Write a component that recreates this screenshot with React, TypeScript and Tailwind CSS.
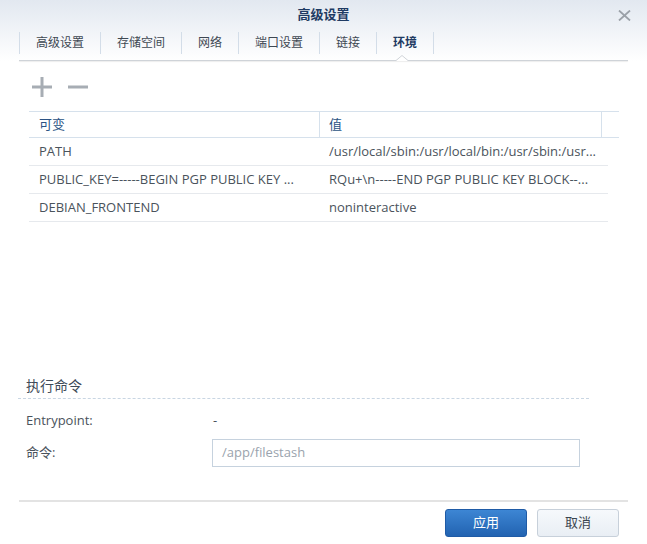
import React from "react";

const tabs = ["高级设置", "存储空间", "网络", "端口设置", "链接", "环境"];

const rows = [
  ["PATH", "/usr/local/sbin:/usr/local/bin:/usr/sbin:/usr..."],
  ["PUBLIC_KEY=-----BEGIN PGP PUBLIC KEY ...", "RQu+\\n-----END PGP PUBLIC KEY BLOCK--..."],
  ["DEBIAN_FRONTEND", "noninteractive"],
];

export default function App() {
  return (
    <div className="w-[647px] h-[544px] bg-white flex flex-col font-['Liberation_Sans','Noto_Sans_CJK_SC',sans-serif] text-[#4a535c] overflow-hidden">
      {/* header + tabs with gradient */}
      <div className="bg-gradient-to-b from-[#e2e8f0] to-white">
        <div className="h-[30px] grid grid-cols-[1fr_auto_1fr] items-center">
          <div />
          <div className="text-[13px] font-bold text-[#1f3b63]">高级设置</div>
          <div className="flex justify-end pr-[16px]">
            <svg width="13" height="11" viewBox="0 0 13 11">
              <path d="M1 0.5 L12 10.5 M12 0.5 L1 10.5" stroke="#9ba1a8" strokeWidth="1.8" fill="none" />
            </svg>
          </div>
        </div>
        <div className="mx-[19px] mt-[2px]">
          <div className="flex h-[22px]">
            {tabs.map((t, i) => (
              <div
                key={t}
                className={`flex items-center px-4 border-l border-[#d3dde8] text-[12px] ${
                  i === tabs.length - 1
                    ? "border-r font-bold text-[#1f3b63]"
                    : "text-[#3e4852]"
                }`}
              >
                {t}
              </div>
            ))}
          </div>
          <div className="h-[6px]" />
          <div className="relative h-[1px] bg-[#cfd3d8] shadow-[0_1px_1px_rgba(0,0,0,0.08)]">
            <svg
              className="absolute left-[377px] bottom-0"
              width="12"
              height="6"
              viewBox="0 0 12 6"
            >
              <path d="M0 6 L0 5.5 L6 0.5 L12 5.5 L12 6 Z" fill="white" />
              <path d="M0 5.5 L6 0.5 L12 5.5" stroke="#cfd3d8" strokeWidth="1" fill="none" />
            </svg>
          </div>
        </div>
      </div>

      {/* toolbar */}
      <div className="h-[50px] pl-[32px] flex items-center gap-[16px] pt-[2px]">
        <svg width="20" height="20" viewBox="0 0 20 20">
          <rect x="0" y="8.5" width="20" height="3" fill="#a7adb4" />
          <rect x="8.5" y="0" width="3" height="20" fill="#a7adb4" />
        </svg>
        <svg width="20" height="20" viewBox="0 0 20 20">
          <rect x="0" y="8.5" width="20" height="3" fill="#a7adb4" />
        </svg>
      </div>

      {/* table */}
      <div className="ml-[29px] w-[590px] text-[13px] font-['Open_Sans','Noto_Sans_CJK_SC',sans-serif]">
        <div className="flex h-[27px] border-y border-[#d6e1ec] text-[#2b5384]">
          <div className="w-[291px] pl-[10px] flex items-center border-r border-[#d6e1ec]">可变</div>
          <div className="w-[282px] pl-[9px] flex items-center border-r border-[#d6e1ec]">值</div>
          <div className="flex-1" />
        </div>
        {rows.map((r) => (
          <div key={r[0]} className="flex h-[28px] w-[579px] border-b border-[#e6e9ed]">
            <div className="w-[291px] pl-[10px] flex items-center whitespace-nowrap overflow-hidden">{r[0]}</div>
            <div className="flex-1 pl-[9px] flex items-center whitespace-nowrap overflow-hidden">{r[1]}</div>
          </div>
        ))}
      </div>

      <div className="flex-1" />

      {/* command section */}
      <div className="font-['Open_Sans','Noto_Sans_CJK_SC',sans-serif]">
        <div className="mx-[18px] w-[571px] border-b border-dashed border-[#c9d6e3] pb-[3px] pl-[8px] text-[14px] text-[#3e4a58] h-[24px] flex items-center">
          执行命令
        </div>
        <div className="pl-[26px] mt-[9px] flex items-center h-[26px] text-[13px]">
          <div className="w-[187px]">Entrypoint:</div>
          <div>-</div>
        </div>
        <div className="pl-[26px] mt-[5px] flex items-center text-[13px]">
          <div className="w-[186px]">命令:</div>
          <div className="w-[368px] h-[28px] border border-[#c6d2de] flex items-center pl-[9px] text-[#9aa3ad] text-[13px]">
            /app/filestash
          </div>
        </div>
      </div>

      {/* footer */}
      <div className="mt-[33px] mx-[19px] h-[2px] bg-[#e3e3e3]" />
      <div className="h-[42px] flex items-start justify-end gap-[10px] pr-[28px] pt-[7px]">
        <button className="w-[82px] h-[28px] rounded-[3px] border border-[#1f5ba6] bg-gradient-to-b from-[#3d86d4] to-[#2263b1] text-white text-[13px]">
          应用
        </button>
        <button className="w-[82px] h-[28px] rounded-[3px] border border-[#c7d0da] bg-gradient-to-b from-[#f6f9fc] to-[#e9eef4] text-[#3b4550] text-[13px]">
          取消
        </button>
      </div>
    </div>
  );
}
